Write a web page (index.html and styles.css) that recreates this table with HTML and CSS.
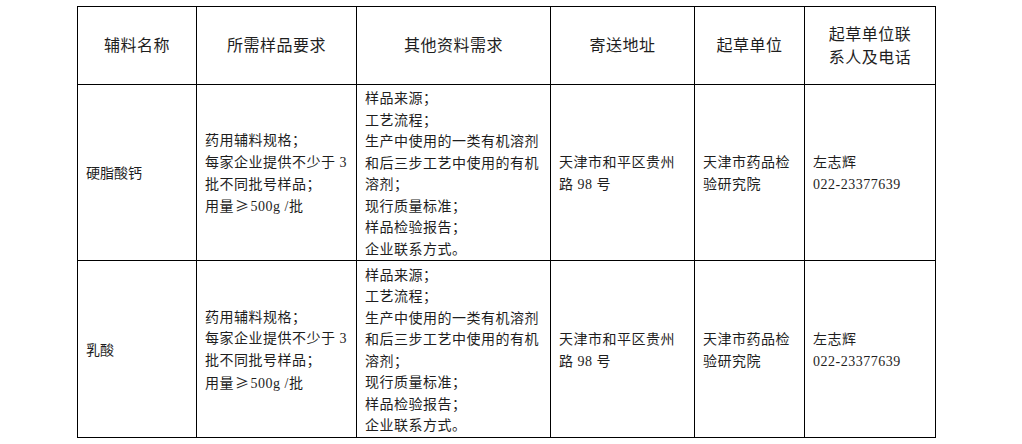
FILE: index.html
```html
<!DOCTYPE html>
<html lang="zh-CN">
<head>
<meta charset="utf-8">
<title>辅料</title>
<link rel="stylesheet" href="styles.css">
</head>
<body>
<table class="tbl">
  <colgroup>
    <col class="c1"><col class="c2"><col class="c3"><col class="c4"><col class="c5"><col class="c6">
  </colgroup>
  <thead>
    <tr class="head">
      <th>辅料名称</th>
      <th>所需样品要求</th>
      <th>其他资料需求</th>
      <th>寄送地址</th>
      <th>起草单位</th>
      <th>起草单位联<br>系人及电话</th>
    </tr>
  </thead>
  <tbody>
    <tr class="row r1">
      <td class="name">硬脂酸钙</td>
      <td>药用辅料规格；<br>每家企业提供不少于 3<br>批不同批号样品；<br>用量<span class="ge">≥</span>500g /批</td>
      <td class="docs">样品来源；<br>工艺流程；<br>生产中使用的一类有机溶剂<br>和后三步工艺中使用的有机<br>溶剂；<br>现行质量标准；<br>样品检验报告；<br>企业联系方式。</td>
      <td>天津市和平区贵州<br>路 98 号</td>
      <td>天津市药品检<br>验研究院</td>
      <td>左志辉<br>022-23377639</td>
    </tr>
    <tr class="row r2">
      <td class="name">乳酸</td>
      <td>药用辅料规格；<br>每家企业提供不少于 3<br>批不同批号样品；<br>用量<span class="ge">≥</span>500g /批</td>
      <td class="docs">样品来源；<br>工艺流程；<br>生产中使用的一类有机溶剂<br>和后三步工艺中使用的有机<br>溶剂；<br>现行质量标准；<br>样品检验报告；<br>企业联系方式。</td>
      <td>天津市和平区贵州<br>路 98 号</td>
      <td>天津市药品检<br>验研究院</td>
      <td>左志辉<br>022-23377639</td>
    </tr>
  </tbody>
</table>
</body>
</html>
```

FILE: styles.css
```css
html, body {
  margin: 0;
  padding: 0;
  background: #ffffff;
}
body {
  padding: 6px 0 0 77px;
  font-family: "Liberation Serif", "Noto Sans CJK SC", serif;
  color: #1e1e1e;
}
.tbl {
  border-collapse: collapse;
  table-layout: fixed;
  width: 859px;
}
.c1 { width: 119px; }
.c2 { width: 160px; }
.c3 { width: 194px; }
.c4 { width: 144px; }
.c5 { width: 110px; }
.c6 { width: 131px; }
.tbl th, .tbl td {
  border: 1px solid #000;
  white-space: nowrap;
  overflow: visible;
}
.tbl th {
  font-weight: normal;
  font-size: 16px;
  letter-spacing: 0.5px;
  line-height: 23px;
  text-align: center;
  vertical-align: middle;
  padding: 0;
}
.head { height: 78px; }
.tbl td {
  font-size: 14px;
  letter-spacing: 0.5px;
  line-height: 21.7px;
  text-align: left;
  vertical-align: middle;
  padding: 3px 6px 0 8px;
}
.tbl td.name { letter-spacing: 0; }
.tbl td.docs {
  line-height: 21.5px;
  padding-top: 3px;
  padding-bottom: 0;
}
.ge {
  font-family: "Noto Sans CJK SC", sans-serif;
  margin: 0 1px;
}
.r1 { height: 176px; }
.r2 { height: 177px; }
```
